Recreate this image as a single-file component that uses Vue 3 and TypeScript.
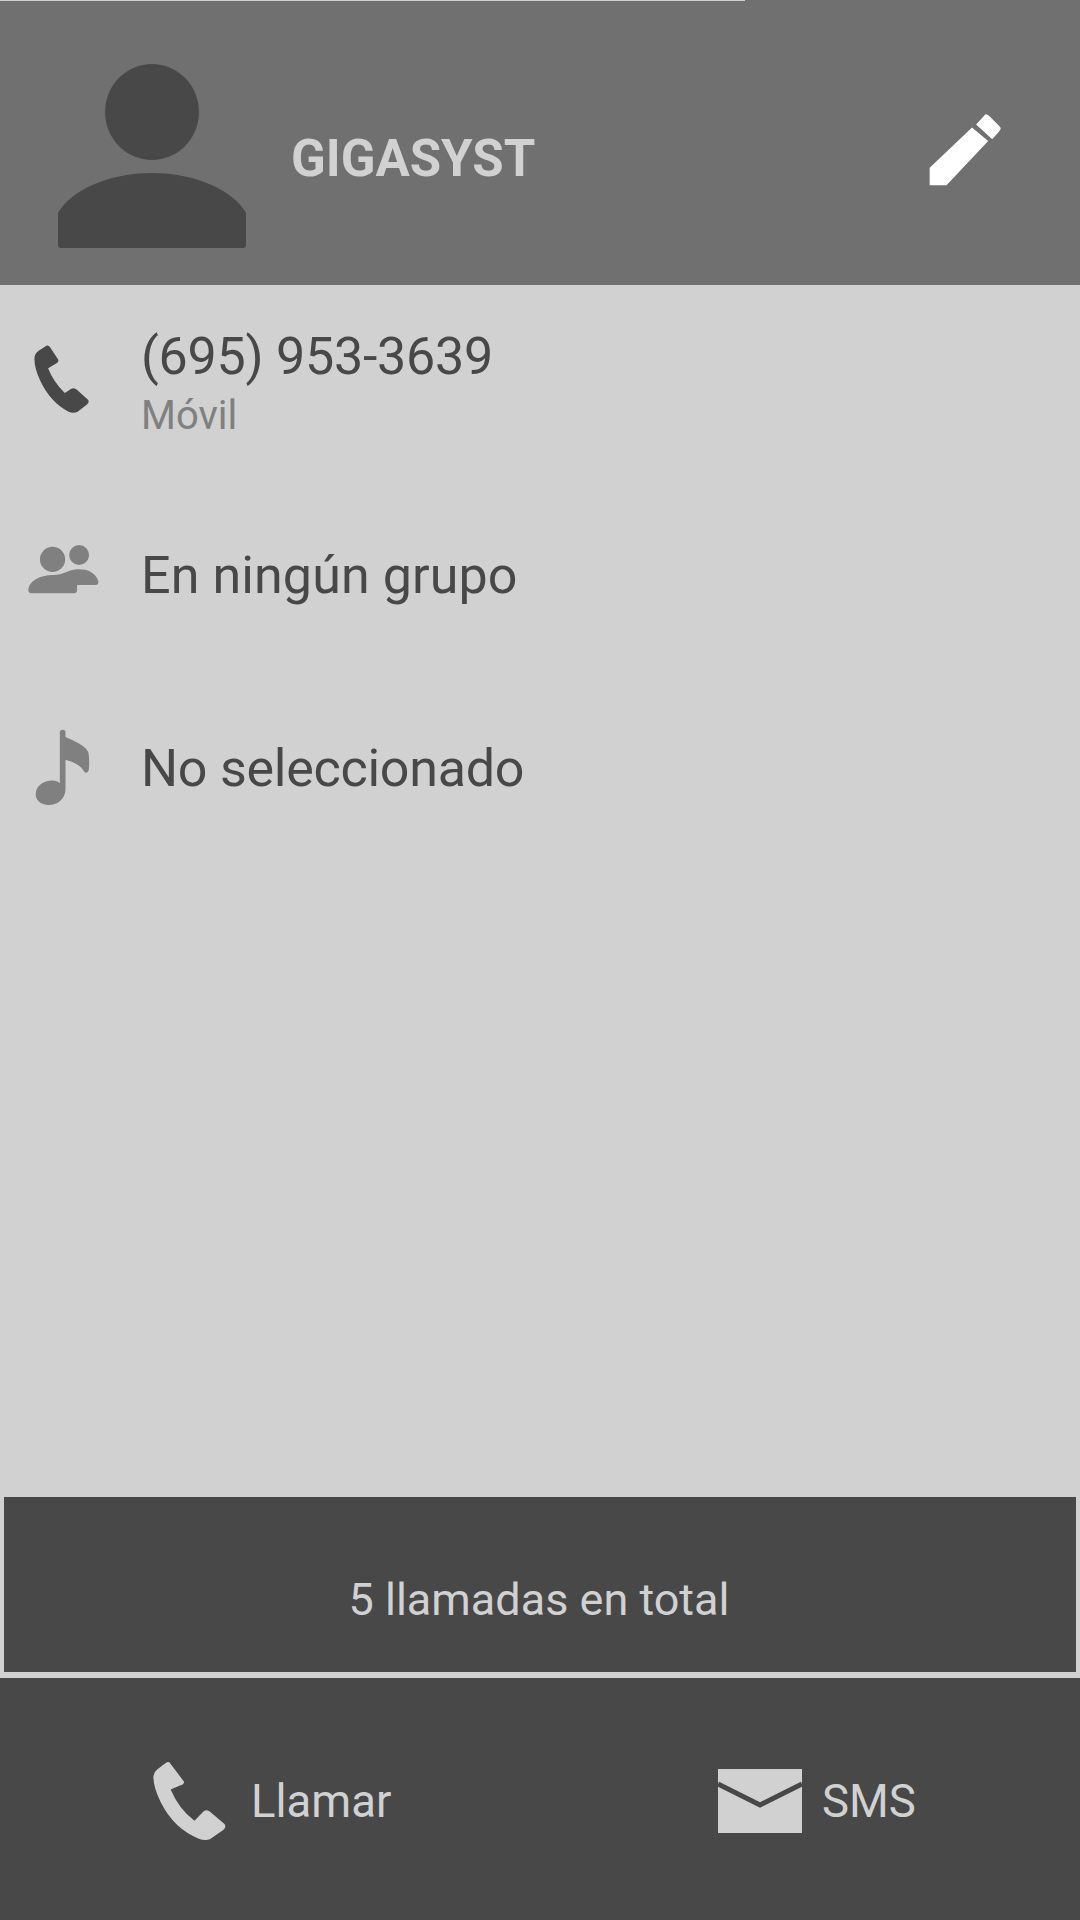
<script setup lang="ts">
const rows = [
  { id: 'phone', text: '(695) 953-3639', sub: 'Móvil' },
  { id: 'group', text: 'En ningún grupo', sub: '' },
  { id: 'tone', text: 'No seleccionado', sub: '' },
]
</script>

<template>
  <div class="screen">
    <header class="header">
      <svg class="avatar" viewBox="0 0 188 184">
        <ellipse cx="94" cy="48" rx="47" ry="48" fill="#484848" />
        <path d="M0 149 C12 127 50 109 94 109 C138 109 176 127 188 149 V181 Q188 184 185 184 H3 Q0 184 0 181 Z" fill="#484848" />
      </svg>
      <div class="name">GIGASYST</div>
      <svg class="pencil" viewBox="88 72 214 214">
        <path d="M216 112 L264 152 L140 284 L90 284 L90 232 Z M256 73 Q262 73 268 79 L298 109 Q304 115 298 122 L276 147 L228 103 Z" fill="#fff" />
      </svg>
    </header>
    <div class="progress"></div>

    <main class="details">
      <div v-for="row in rows" :key="row.id" class="row" :class="row.id">
        <div class="row-icon">
          <svg v-if="row.id === 'phone'" class="ic-phone" viewBox="42 45 167 205">
            <path d="M80 46 Q88 45 92 54 L114 88 Q117 96 108 100 L84 114 Q100 155 134 188 L152 176 Q162 170 170 178 L203 208 Q208 214 200 222 L172 244 Q160 250 145 244 Q90 215 60 150 Q40 105 44 78 Q46 68 56 62 Z" fill="#484848" />
          </svg>
          <svg v-else-if="row.id === 'group'" class="ic-group" viewBox="24 42 214 150">
            <circle cx="98" cy="88" r="38" fill="#808080" />
            <circle cx="178" cy="75" r="30" fill="#808080" />
            <path d="M25 180 C28 150 65 135 100 135 C115 135 130 130 150 122 C165 116 195 115 212 125 C228 134 238 150 236 160 Q235 165 228 165 H172 V180 Q172 190 162 190 H35 Q25 190 25 180 Z" fill="#808080" />
          </svg>
          <svg v-else class="ic-note" viewBox="44 26 164 230">
            <path d="M118 36 Q118 28 126 28 Q135 28 135 36 V50 C160 62 195 75 203 95 C207 115 206 140 204 150 Q198 162 190 152 C180 135 160 125 135 118 V205 C135 235 110 253 85 253 C60 253 46 238 46 222 C46 195 70 180 95 180 Q108 180 118 187 Z" fill="#808080" />
          </svg>
        </div>
        <div class="row-text">
          <div class="main-text">{{ row.text }}</div>
          <div v-if="row.sub" class="sub-text">{{ row.sub }}</div>
        </div>
      </div>
    </main>

    <section class="calls">5 llamadas en total</section>

    <footer class="actions">
      <div class="action call">
        <svg class="ic-call" viewBox="66 60 222 242">
          <path d="M116 64 L160 122 Q162 130 150 133 L120 146 Q145 205 192 241 L220 212 Q230 205 240 214 L282 250 Q290 258 280 268 L240 296 Q225 303 205 295 Q130 265 90 185 Q66 135 68 105 Q70 92 80 85 L105 66 Q112 62 116 64 Z" fill="#d1d1d1" />
        </svg>
        <span>Llamar</span>
      </div>
      <div class="action sms">
        <svg class="ic-mail" viewBox="0 0 84 64">
          <rect width="84" height="64" fill="#d1d1d1" />
          <path d="M0 15 L42 36 L84 15" fill="none" stroke="#484848" stroke-width="5" />
        </svg>
        <span>SMS</span>
      </div>
    </footer>
  </div>
</template>

<style>
html, body {
  margin: 0;
  background: #d1d1d1;
}
</style>

<style scoped>
.screen {
  position: relative;
  display: flex;
  flex-direction: column;
  width: 1080px;
  height: 1920px;
  overflow: hidden;
  background: #d1d1d1;
  color: #484848;
  font-family: Roboto, sans-serif;
}
.header {
  display: flex;
  align-items: flex-start;
  height: 285px;
  flex: none;
  box-sizing: border-box;
  padding-left: 58px;
  background: #707070;
}
.progress {
  position: absolute;
  top: 0;
  left: 0;
  width: 745px;
  height: 1px;
  background: #d1d1d1;
}
.avatar {
  width: 188px;
  height: 184px;
  margin-top: 64px;
}
.name {
  margin: 129px 0 0 45px;
  font-size: 51px;
  font-weight: 700;
  line-height: 60px;
  color: #d1d1d1;
}
.pencil {
  width: 72px;
  height: 72px;
  margin: 114px 79px 0 auto;
}
.details {
  flex: 1;
  min-height: 0;
}
.row {
  display: flex;
  box-sizing: border-box;
}
.row-icon {
  width: 141px;
  flex: none;
}
.row-icon svg {
  display: block;
}
.phone {
  height: 237px;
  padding-top: 41px;
}
.phone .main-text {
  letter-spacing: -0.25px;
}
.group {
  height: 193px;
  padding-top: 22px;
}
.group .row-text {
  margin-top: 1px;
}
.group .main-text {
  letter-spacing: 0.1px;
}
.tone {
  padding-top: 14px;
}
.tone .row-text {
  margin-top: 9px;
}
.tone .main-text {
  letter-spacing: -0.25px;
}
.ic-phone {
  width: 56px;
  height: 69px;
  margin: 19px 0 0 34px;
}
.ic-group {
  width: 71px;
  height: 50px;
  margin-left: 28px;
}
.ic-note {
  width: 55px;
  height: 77px;
  margin-left: 35px;
}
.main-text {
  font-size: 52px;
  line-height: 62px;
}
.sub-text {
  margin-top: 6px;
  font-size: 40px;
  line-height: 44px;
  color: #808080;
}
.calls {
  display: flex;
  align-items: center;
  justify-content: center;
  flex: none;
  box-sizing: border-box;
  height: 175px;
  margin: 0 4px 6px;
  padding: 30px 2px 0 0;
  background: #484848;
  color: #d1d1d1;
  font-size: 45px;
}
.actions {
  display: flex;
  flex: none;
  height: 242px;
  background: #484848;
  color: #d1d1d1;
  font-size: 45.5px;
}
.action {
  display: flex;
  align-items: center;
  flex: none;
  box-sizing: border-box;
  height: 242px;
  padding-top: 4px;
}
.call {
  width: 565px;
  padding-left: 152px;
}
.sms {
  padding-left: 153px;
}
.ic-call {
  width: 75px;
  height: 80px;
  margin-right: 24px;
}
.ic-mail {
  width: 84px;
  height: 64px;
  margin-right: 20px;
}
</style>
